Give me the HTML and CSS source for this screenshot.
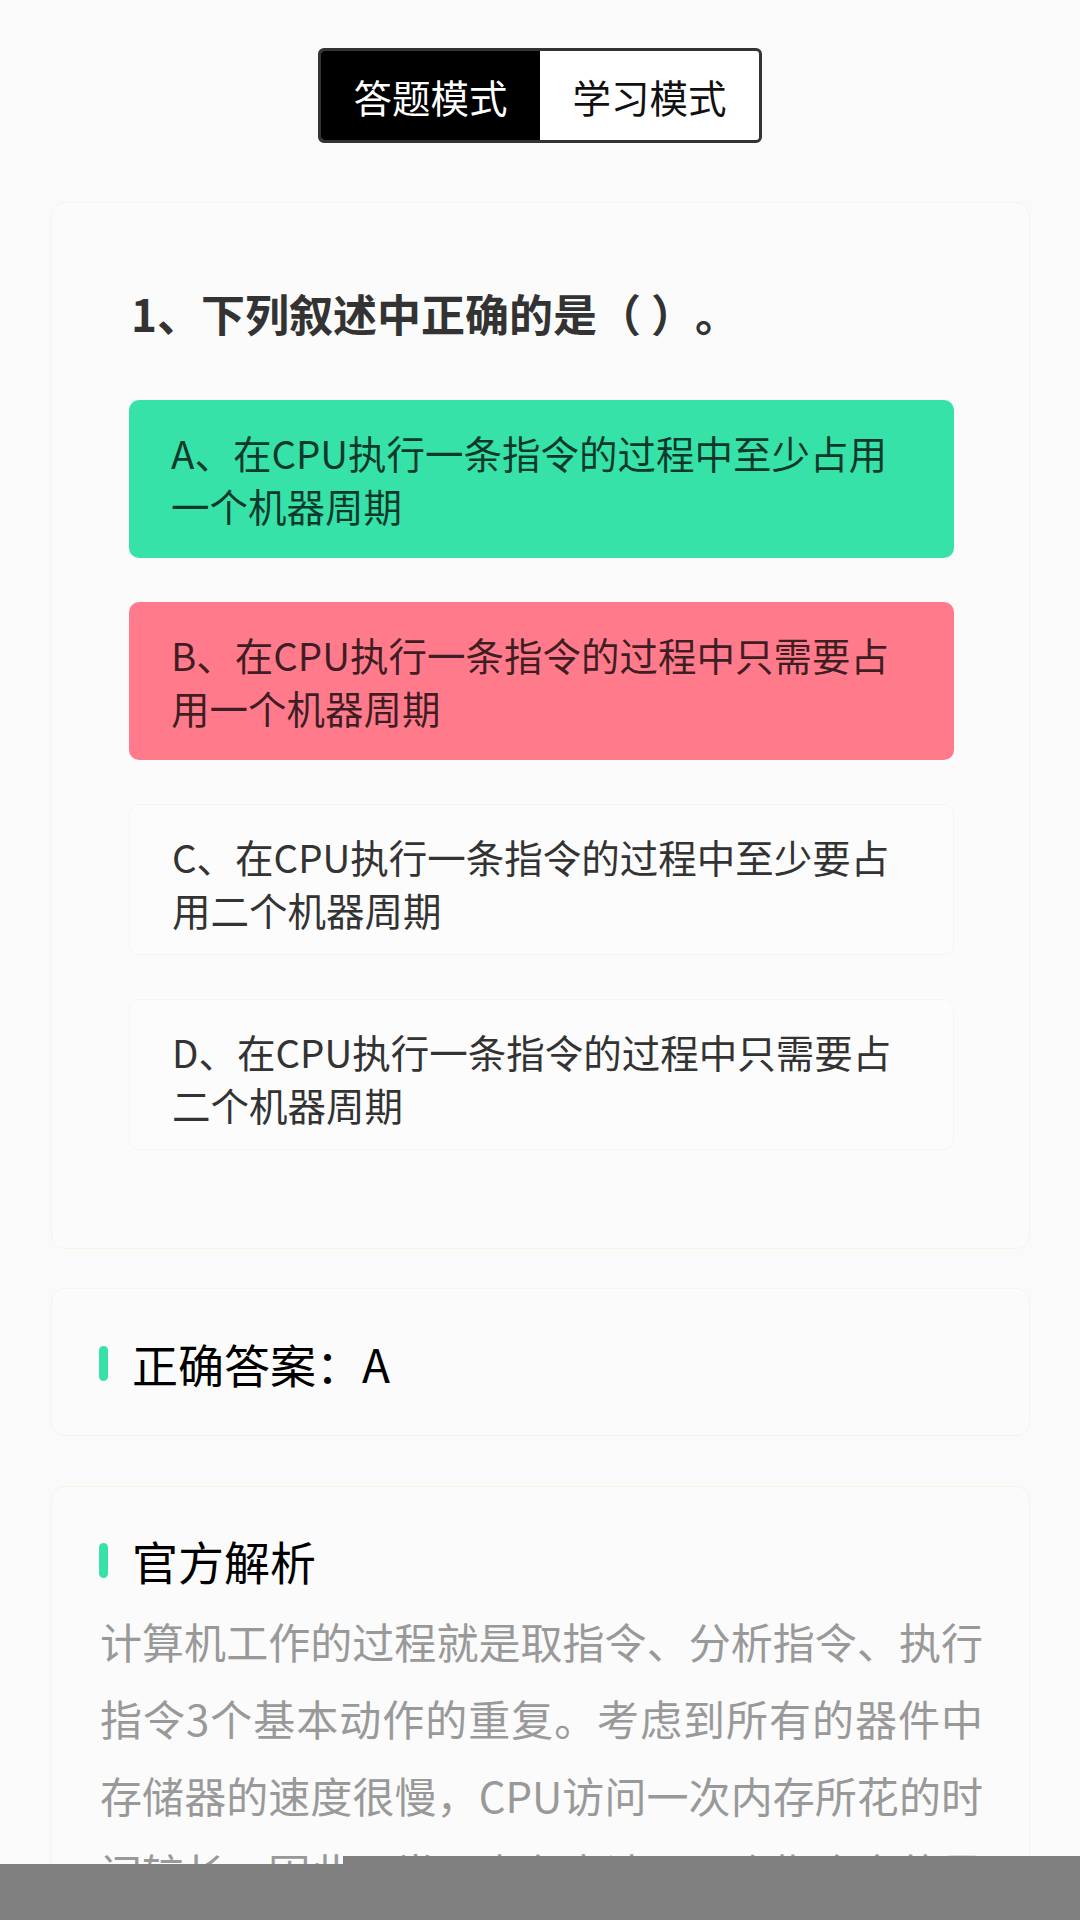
FILE: index.html
```html
<!DOCTYPE html>
<html lang="zh-CN">
<head>
<meta charset="utf-8">
<title>答题</title>
<link rel="stylesheet" href="styles.css">
</head>
<body>
<main class="page">
  <div class="mode-switch">
    <div class="mode active">答题模式</div>
    <div class="mode">学习模式</div>
  </div>

  <section class="card question-card">
    <h2 class="question">1、下列叙述中正确的是（ ）。</h2>
    <ul class="options">
      <li class="option correct">A、在CPU执行一条指令的过程中至少占用一个机器周期</li>
      <li class="option wrong">B、在CPU执行一条指令的过程中只需要占用一个机器周期</li>
      <li class="option plain">C、在CPU执行一条指令的过程中至少要占用二个机器周期</li>
      <li class="option plain">D、在CPU执行一条指令的过程中只需要占二个机器周期</li>
    </ul>
  </section>

  <section class="card answer-card">
    <h3 class="section-title">正确答案：A</h3>
  </section>

  <section class="card analysis-card">
    <h3 class="section-title">官方解析</h3>
    <p class="analysis">计算机工作的过程就是取指令、分析指令、执行指令3个基本动作的重复。考虑到所有的器件中<br>存储器的速度很慢，CPU访问一次内存所花的时间较长，因此通常用内存中读取一个指令字的最短时间来规定CPU周期，也称为机器周期。</p>
  </section>
</main>
<div class="nav-bar"></div>
</body>
</html>
```

FILE: styles.css
```css
html, body {
  margin: 0;
  padding: 0;
}

body {
  background: #fafafa;
  font-family: "Noto Sans CJK SC", "Noto Sans", sans-serif;
  color: #333;
  text-spacing-trim: space-all;
}

.page {
  padding: 48px 0 200px;
}

/* mode switch */
.mode-switch {
  display: flex;
  width: 444px;
  height: 95px;
  margin: 0 auto;
  box-sizing: border-box;
  border: 3px solid #333;
  border-radius: 6px;
  overflow: hidden;
  background: #fff;
}

.mode {
  flex: 1;
  display: flex;
  align-items: center;
  justify-content: center;
  font-size: 38.5px;
  color: #111;
}

.mode.active {
  background: #000;
  color: #fff;
}

/* cards */
.card {
  margin: 0 50px 0 51px;
  box-sizing: border-box;
  background: #fbfbfb;
  border: 1px solid #fcf2e6;
  border-radius: 14px;
}

.question-card {
  margin-top: 59px;
  padding: 80px 75px 98px 77px;
}

.question {
  margin: 0 0 57px 2px;
  font-size: 44px;
  line-height: 60px;
  font-weight: 700;
  color: #333;
}

.options {
  list-style: none;
  margin: 0;
  padding: 0;
}

.option {
  margin-bottom: 44px;
  padding: 26px 42px;
  border-radius: 10px;
  font-size: 38.5px;
  line-height: 53px;
  color: rgba(0, 0, 0, 0.76);
}

.option:last-child {
  margin-bottom: 0;
}

.option.correct {
  background: #36e2a8;
}

.option.wrong {
  background: #ff7b8c;
}

.option.plain {
  padding: 25px 42px 18px;
  background: #fcfcfc;
  border: 1px solid #fcf4ea;
  color: #333;
}

/* answer + analysis */
.answer-card {
  margin-top: 39px;
  padding: 44px 47px 42px;
}

.analysis-card {
  margin-top: 50px;
  padding: 43px 46px 60px 47px;
}

.section-title {
  display: flex;
  align-items: center;
  gap: 24px;
  margin: 0;
  font-size: 46px;
  line-height: 60px;
  font-weight: 400;
  color: #000;
}

.section-title::before {
  content: "";
  width: 9px;
  height: 35px;
  border-radius: 5px;
  background: #36e2a8;
}

.analysis {
  margin: 12px 0 0 1px;
  font-size: 42px;
  line-height: 77px;
  color: #999;
  text-align: justify;
  text-align-last: justify;
}

/* system navigation bar overlay */
.nav-bar {
  position: fixed;
  left: 0;
  right: 0;
  bottom: 0;
  height: 56px;
  background: #808080;
}

.nav-bar::before {
  content: "";
  position: absolute;
  left: 343px;
  right: 0;
  top: -8px;
  height: 8px;
  background: #808080;
}
```
